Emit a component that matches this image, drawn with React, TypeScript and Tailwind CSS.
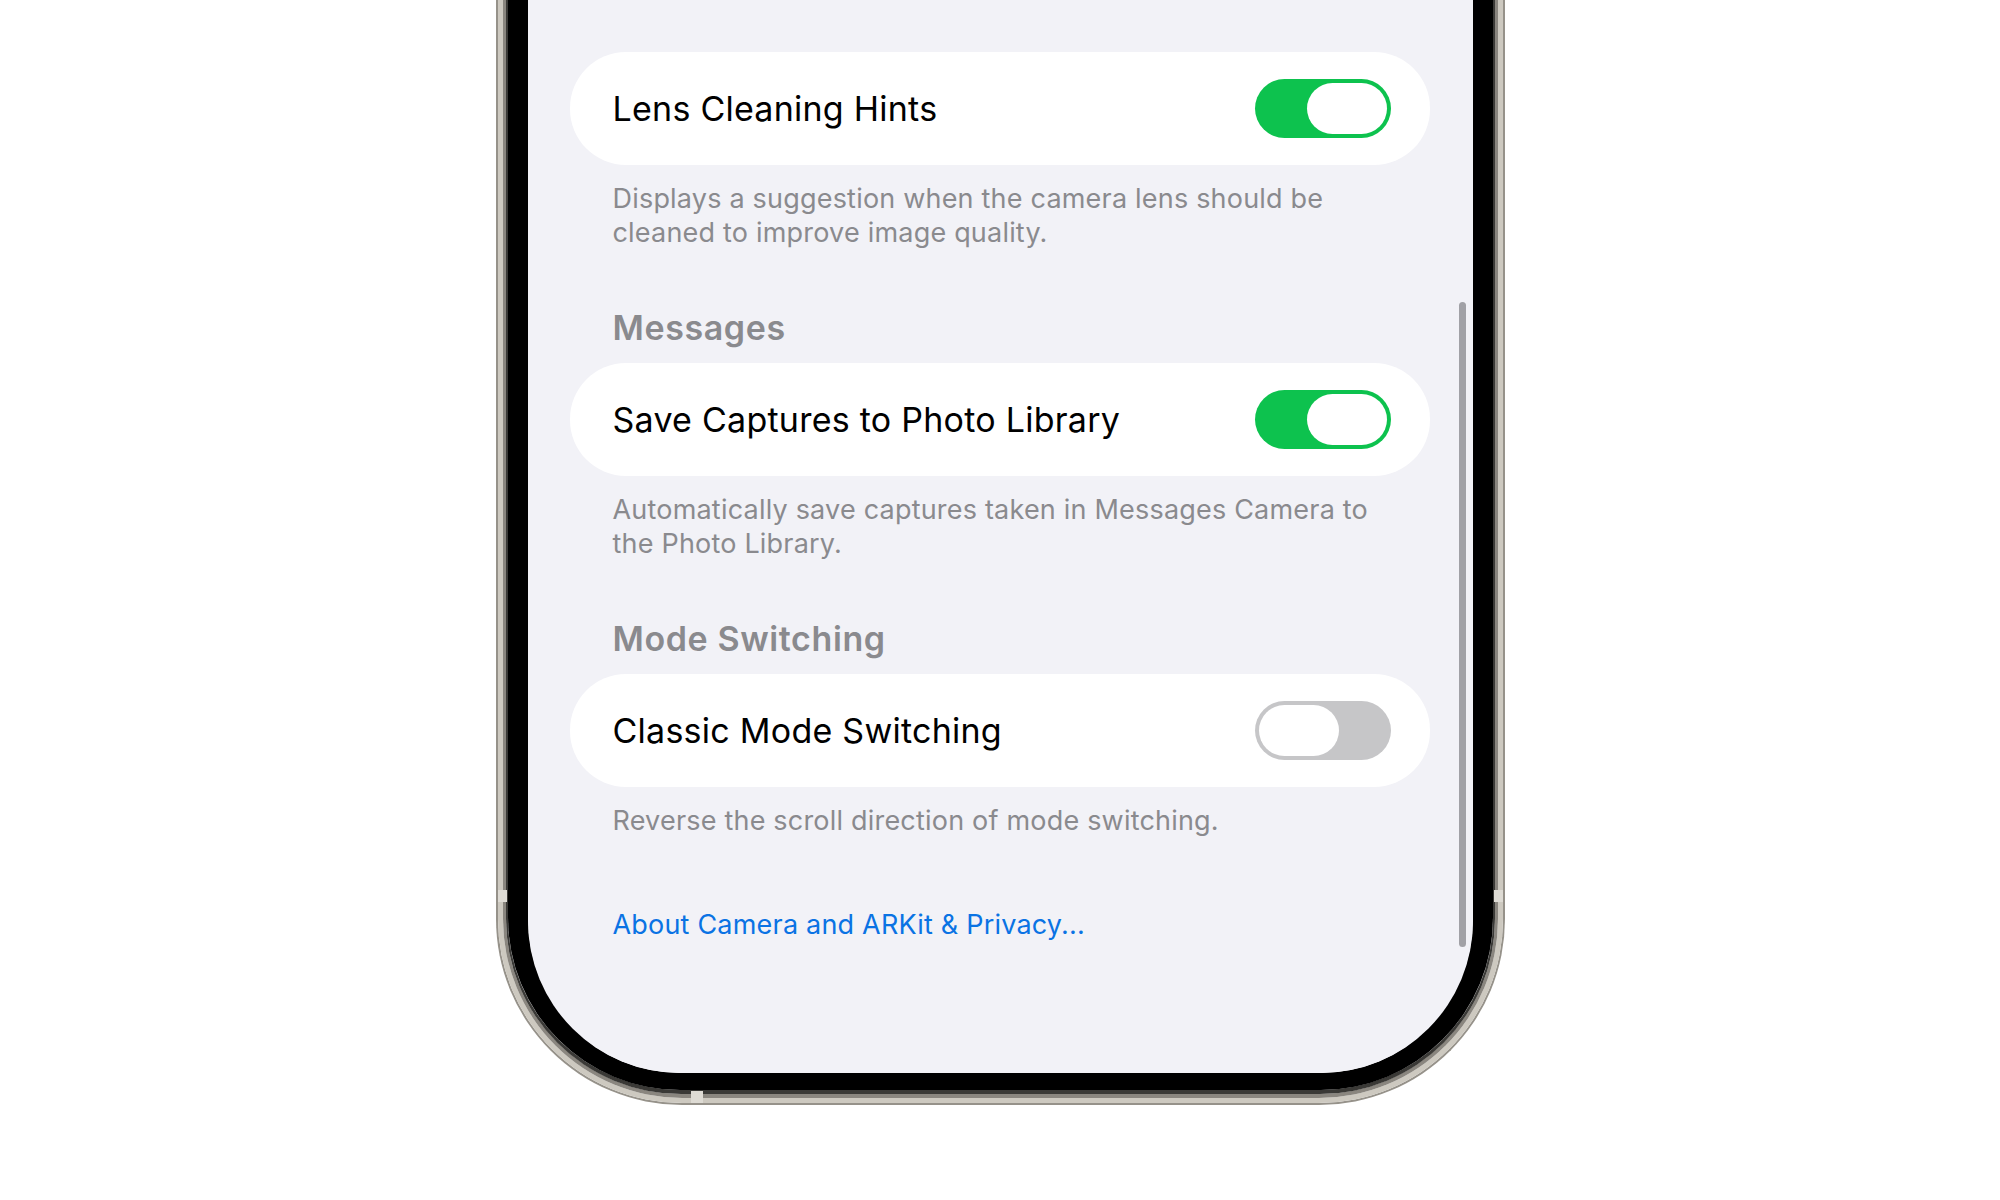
import { useState } from "react";

type Section = {
    header?: string;
    label: string;
    footer: string[];
    on: boolean;
};

const initialSections: Section[] = [
    {
        label: "Lens Cleaning Hints",
        footer: [
            "Displays a suggestion when the camera lens should be",
            "cleaned to improve image quality.",
        ],
        on: true,
    },
    {
        header: "Messages",
        label: "Save Captures to Photo Library",
        footer: [
            "Automatically save captures taken in Messages Camera to",
            "the Photo Library.",
        ],
        on: true,
    },
    {
        header: "Mode Switching",
        label: "Classic Mode Switching",
        footer: ["Reverse the scroll direction of mode switching."],
        on: false,
    },
];

const Toggle = ({ on, onClick }: { on: boolean; onClick: () => void }) => (
    <button
        onClick={onClick}
        className={
            on
                ? "flex h-[59px] w-[136px] shrink-0 justify-end rounded-full bg-[#0dc24e] p-[4px]"
                : "flex h-[59px] w-[136px] shrink-0 justify-start rounded-full bg-[#c6c6c8] p-[4px]"
        }
    >
        <span className="h-[51px] w-[80px] rounded-full bg-white" />
    </button>
);

const App = () => {
    const [sections, setSections] = useState(initialSections);

    const flip = (index: number) => {
        setSections((prev) => prev.map((s, i) => (i === index ? { ...s, on: !s.on } : s)));
    };

    return (
        <div className="h-[1200px] w-full overflow-hidden bg-white font-[Inter,'Noto_Sans',sans-serif]">
            {/* phone frame: titanium bands, then black bezel */}
            <div className="relative mx-auto w-[1009px] rounded-b-[186px] border-x-[2px] border-b-[2px] border-[#96928a]">
                <div className="rounded-b-[184px] border-x-[5px] border-b-[5px] border-[#cdc9c0]">
                    <div className="rounded-b-[179px] border-x-[3px] border-b-[4px] border-[#8a867f]">
                        <div className="rounded-b-[175px] border-x-[2px] border-b-[4px] border-[#3a3936]">
                            <div className="rounded-b-[172px] border-x-[20px] border-b-[17px] border-black">
                                <div className="relative h-[1073px] overflow-hidden rounded-b-[152px] bg-[#f2f2f7] pl-[42px] pr-[43px] pt-[52px]">
                                    {sections.map((section, index) => (
                                        <div key={section.label}>
                                            {section.header && (
                                                <p className="mt-[57px] px-[43px] text-[34px] font-semibold leading-[41px] tracking-[0.6px] text-[#8a8a8e]">
                                                    {section.header}
                                                </p>
                                            )}
                                            <div
                                                className={
                                                    section.header
                                                        ? "mt-[15px] flex h-[113px] items-center justify-between rounded-[56px] bg-white pl-[43px] pr-[39px]"
                                                        : "flex h-[113px] items-center justify-between rounded-[56px] bg-white pl-[43px] pr-[39px]"
                                                }
                                            >
                                                <span className="text-[34px] tracking-[0.25px] text-black">{section.label}</span>
                                                <Toggle on={section.on} onClick={() => flip(index)} />
                                            </div>
                                            <div className="mt-[17px] px-[43px] text-[27px] leading-[34px] tracking-[0.2px] text-[#8a8a8e]">
                                                {section.footer.map((line) => (
                                                    <p key={line} className="whitespace-nowrap">
                                                        {line}
                                                    </p>
                                                ))}
                                            </div>
                                        </div>
                                    ))}

                                    <a className="mt-[70px] block px-[43px] text-[27px] leading-[34px] tracking-[0.2px] text-[#0a73e4]">
                                        About Camera and ARKit &amp; Privacy...
                                    </a>

                                    {/* scroll indicator */}
                                    <div className="absolute right-[7px] top-[302px] h-[645px] w-[7px] rounded-full bg-[#a1a1a6]" />
                                </div>
                            </div>
                        </div>
                    </div>
                </div>

                {/* antenna lines */}
                <div className="absolute left-0 top-[890px] h-[12px] w-[9px] bg-[#dedbd4]" />
                <div className="absolute right-0 top-[890px] h-[12px] w-[9px] bg-[#dedbd4]" />
                <div className="absolute bottom-0 left-[193px] h-[12px] w-[12px] bg-[#dedbd4]" />
            </div>
        </div>
    );
};

export default App;
